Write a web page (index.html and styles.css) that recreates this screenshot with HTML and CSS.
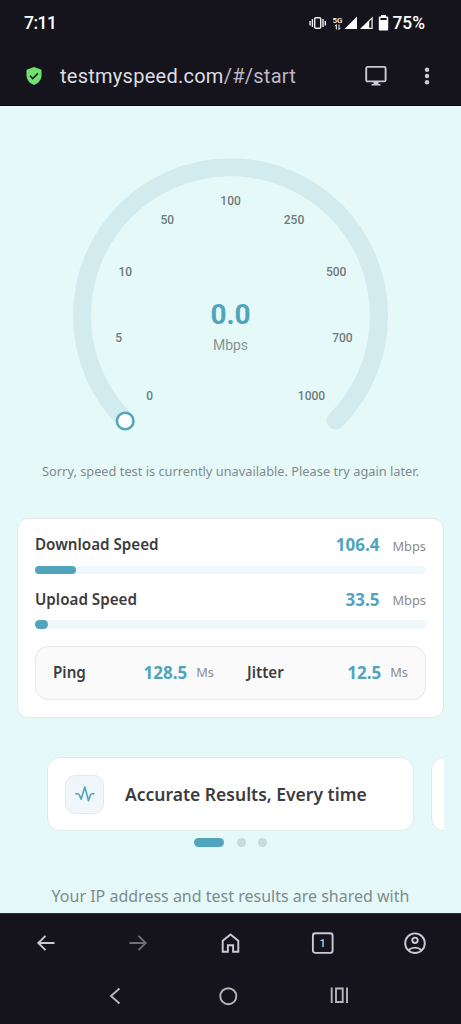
FILE: index.html
```html
<!DOCTYPE html>
<html lang="en">
<head>
<meta charset="utf-8">
<title>Speed test</title>
<link rel="stylesheet" href="styles.css">
</head>
<body>
<div class="phone">
  <header class="top">
    <div class="status">
      <span class="clock">7:11</span>
      <svg class="indicators" width="120" height="24" viewBox="308 11 120 24">
        <g fill="none" stroke="#eeeeec" stroke-width="1.4">
          <rect x="314.7" y="17.7" width="6" height="10.6" rx="1"/>
          <path d="M312.4 19v8M323 19v8M310.1 21v4.500M325.300 21v4.500"/>
        </g>
        <text class="net" x="332.500" y="23">5G</text>
        <path d="M336.300 29.500v-5M334.800 26.200l1.500-1.500M339 24.500v5M340.500 27.800l-1.500 1.500" stroke="#fff" fill="none"/>
        <path d="M357 16.500V29h-12.500z" fill="#fff"/>
        <path d="M372.700 16.500V29H360z" fill="#fff"/>
        <path d="M369.200 21.500l2.300-2.300v8.500h-2.300z" fill="#15141c"/>
        <path d="M381 15h5v1.500h1.200q1 0 1 1V29.500q0 1-1 1h-7.400q-1 0-1-1v-12q0-1 1-1h1.200z" fill="#fff"/>
        <path d="M380.300 18h6.400v2h-6.400z" fill="#15141c"/>
        <text class="battery" x="392.500" y="29" textLength="32.500" lengthAdjust="spacingAndGlyphs">75%</text>
      </svg>
    </div>
    <div class="address">
      <svg class="shield" width="16" height="20" viewBox="0 0 16 20"><path d="M8 1l7.500 2.700v5.500c0 4.500-3.300 8.200-7.500 9.800C3.800 17.400.5 13.700.5 9.200V3.700z" fill="#70e071"/><path d="M4 9.800l2.700 2.700 5.300-5.300" fill="none" stroke="#15141c" stroke-width="1.600"/></svg>
      <span class="url">testmyspeed.com<span class="path">/#/start</span></span>
      <svg class="desktop" width="22" height="22" viewBox="0 0 22 22"><rect x="1.200" y="1.900" width="19.400" height="14.500" rx="1.500" fill="none" stroke="#cdc9d9" stroke-width="1.900"/><path d="M8.500 16h5v3h1.400q.8 0 .8 1.500H6.300q0-1.500.8-1.500h1.400z" fill="#cdc9d9"/></svg>
      <svg class="dots" width="6" height="20" viewBox="0 0 6 20"><g fill="#cdc9d9"><circle cx="3" cy="3.700" r="2.200"/><circle cx="3" cy="10" r="2.200"/><circle cx="3" cy="16.300" r="2.200"/></g></svg>
    </div>
  </header>

  <main class="page">
    <svg class="gauge" width="461" height="344" viewBox="0 106 461 344">
      <path d="M125.500 420.700A148.500 148.500 0 1 1 335.500 420.700" fill="none" stroke="#d1ebee" stroke-width="18" stroke-linecap="round"/>
      <circle cx="125.200" cy="421" r="8.300" fill="#fff" stroke="#50a5bc" stroke-width="2.500"/>
      <g class="ticks">
        <text x="149.700" y="399.700">0</text>
        <text x="118.700" y="342">5</text>
        <text x="125.200" y="275.700">10</text>
        <text x="167.200" y="224.300">50</text>
        <text x="230.600" y="205.300">100</text>
        <text x="294" y="224.300">250</text>
        <text x="336.200" y="275.700">500</text>
        <text x="342.400" y="342">700</text>
        <text x="311.500" y="399.700">1000</text>
      </g>
      <text class="reading" x="230.500" y="323.700">0.0</text>
      <text class="reading-unit" x="230.500" y="349.500">Mbps</text>
    </svg>
    <p class="notice">Sorry, speed test is currently unavailable. Please try again later.</p>

    <section class="results">
      <div class="row"><span class="label">Download Speed</span><span class="value">106.4</span><span class="unit">Mbps</span></div>
      <div class="bar"><div class="fill download"></div></div>
      <div class="row second"><span class="label">Upload Speed</span><span class="value">33.5</span><span class="unit">Mbps</span></div>
      <div class="bar"><div class="fill upload"></div></div>
      <div class="latency">
        <div class="metric ping"><span class="label">Ping</span><span class="value">128.5</span><span class="unit">Ms</span></div>
        <div class="metric jitter"><span class="label">Jitter</span><span class="value">12.5</span><span class="unit">Ms</span></div>
      </div>
    </section>

    <div class="carousel">
      <article class="slide">
        <div class="tile"><svg width="20" height="18" viewBox="0 0 20 18"><path d="M.6 8.800h1.900q1.400 0 1.800 1.200L6.200 14.200 9.800 1.700 13.500 15.800l1.900-5.800q.4-1.200 1.700-1.200H19" fill="none" stroke="#50a5bc" stroke-width="1.600" stroke-linecap="round" stroke-linejoin="round"/></svg></div>
        <h2 class="slide-title">Accurate Results, Every time</h2>
      </article>
      <article class="slide"></article>
    </div>
    <div class="pager"><i class="dot active"></i><i class="dot"></i><i class="dot"></i></div>
    <p class="privacy">Your IP address and test results are shared with</p>
  </main>

  <footer class="bottom">
    <nav class="browser-nav">
      <svg width="24" height="24" viewBox="0 0 24 24"><path d="M20.500 12H4M11.500 4.800L4.300 12l7.200 7.200" class="line"/></svg>
      <svg width="24" height="24" viewBox="0 0 24 24"><path d="M3.500 12H20M12.500 4.800l7.200 7.200-7.200 7.200" class="line disabled"/></svg>
      <svg width="24" height="24" viewBox="0 0 24 24"><path d="M3.700 20.700V9.800L11.500 3.500l7.800 6.300v10.900h-5.200v-6.400H8.900v6.400z" class="line"/></svg>
      <svg width="24" height="24" viewBox="0 0 24 24"><rect x="1.900" y="2.200" width="19.700" height="19.700" rx="2.500" class="line"/><text class="tab-count" x="11.700" y="16">1</text></svg>
      <svg width="24" height="24" viewBox="0 0 24 24"><circle cx="12" cy="12.200" r="9.800" class="line"/><circle cx="12" cy="9.300" r="2.700" class="line"/><path d="M5.300 19q6.700-4.800 13.400 0" class="line"/></svg>
    </nav>
    <nav class="system-nav">
      <svg width="24" height="24" viewBox="0 0 24 24"><path d="M16.500 4.500L8 12l8.500 7.500" class="system-line"/></svg>
      <svg width="24" height="24" viewBox="0 0 24 24"><circle cx="12.300" cy="12.200" r="8" class="system-line"/></svg>
      <svg width="24" height="24" viewBox="0 0 24 24"><path d="M3.700 3.500v15.500M19 3.500v15.500M8 4.500h6.700v13.500H8z" class="system-line"/></svg>
    </nav>
  </footer>
</div>
</body>
</html>
```

FILE: styles.css
```css
* { box-sizing: border-box; }
body { margin: 0; background: #15141c; }
svg { display: block; flex: none; }
p, h2 { margin: 0; }
.phone { width: 461px; height: 1024px; overflow: hidden; display: flex; flex-direction: column; font-family: "Noto Sans", sans-serif; }
.top { height: 106px; flex: none; background: #15141c; border-bottom: 1px solid #08070d; }
.status { height: 46px; padding: 11px 33px 0 24px; display: flex; justify-content: space-between; }
.clock { font: 500 17.500px/24px Roboto, sans-serif; letter-spacing: -.5px; color: #fff; }
.net { font: 500 8px Roboto, sans-serif; fill: #fff; }
.battery { font: 500 18px Roboto, sans-serif; fill: #fff; }
.address { height: 60px; display: flex; align-items: center; padding: 0 31px 0 26px; }
.url { margin-left: 18px; width: 305px; font: 400 20px/28px Roboto, sans-serif; letter-spacing: .26px; color: #dedde3; white-space: nowrap; }
.path { color: #bdb9c9; }
.dots { margin-left: 37px; }
.page { height: 807px; flex: none; background: #e6f9f9; overflow: hidden; }
.ticks { font: 500 12px Roboto, sans-serif; fill: #6f7b7b; text-anchor: middle; }
.reading { font: 700 28px Roboto, sans-serif; fill: #50a5bc; text-anchor: middle; }
.reading-unit { font: 400 14px Roboto, sans-serif; fill: #899595; text-anchor: middle; }
.notice { height: 68px; padding-top: 11px; font-size: 12.800px; line-height: 20px; text-align: center; color: #808b8b; white-space: nowrap; }
.results { width: 427px; height: 200px; margin-left: 17px; padding: 15px 17px 17px; background: #fff; border: 1px solid #e1eaea; border-radius: 11px; }
.row { display: flex; height: 22px; align-items: center; line-height: 22px; }
.row.second { margin-top: 11px; }
.label { margin: -2px auto 0 0; font-size: 15.200px; font-weight: 600; color: #3c3c3e; }
.value { font-size: 17px; font-weight: 700; color: #50a5bc; }
.unit { font-size: 12.800px; color: #8b8b8d; }
.row .unit { margin: 1px 0 0 13px; }
.bar { height: 8.500px; border-radius: 5px; background: #f0f7fa; }
.row + .bar { margin-top: 9.500px; margin-bottom: 14.500px; }
.fill { height: 8.500px; border-radius: 5px; background: #50a5bc; }
.download { width: 41px; }
.upload { width: 13px; }
.latency { height: 54px; margin-top: 17px; padding: 0 17px; display: flex; justify-content: space-between; align-items: center; background: #fafafa; border: 1px solid #e7e7e7; border-radius: 13px; }
.metric { display: flex; align-items: center; width: 161px; line-height: 22px; }
.metric .unit { margin: -1px 0 0 9px; }
.carousel { width: 427px; height: 74px; margin: 39px 0 0 17px; padding-left: 30px; overflow: hidden; display: flex; gap: 17px; }
.slide { flex: 0 0 367px; height: 74px; padding: 0 17px; display: flex; align-items: center; background: #fff; border: 1px solid #e1eaea; border-radius: 13px; }
.tile { width: 39px; height: 39px; display: flex; align-items: center; justify-content: center; background: #f0f7fa; border: 1px solid #e4e9eb; border-radius: 10px; }
.slide-title { margin-left: 21px; font-size: 17.500px; font-weight: 600; line-height: 24px; color: #3c3c3e; white-space: nowrap; }
.pager { height: 9px; margin-top: 7px; display: flex; justify-content: center; gap: 12.500px; }
.dot { width: 9px; height: 9px; border-radius: 5px; background: #c9dada; }
.dot.active { width: 30px; background: #50a5bc; }
.privacy { margin-top: 36px; text-align: center; font-size: 16px; line-height: 26px; color: #808b8b; white-space: nowrap; }
.bottom { height: 111px; flex: none; background: #15141c; border-top: 1px solid #292b33; }
.browser-nav { height: 58px; padding: 0 34px; display: flex; align-items: center; justify-content: space-between; }
.system-nav { height: 48px; padding: 0 109px 0 103px; display: flex; align-items: center; justify-content: space-between; }
.line { fill: none; stroke: #cdc9d9; stroke-width: 1.900; }
.line.disabled { stroke: #6f6e74; }
.system-line { fill: none; stroke: #b6b6b6; stroke-width: 1.900; }
.tab-count { font: 500 11px Roboto, sans-serif; fill: #cdc9d9; text-anchor: middle; }
```
